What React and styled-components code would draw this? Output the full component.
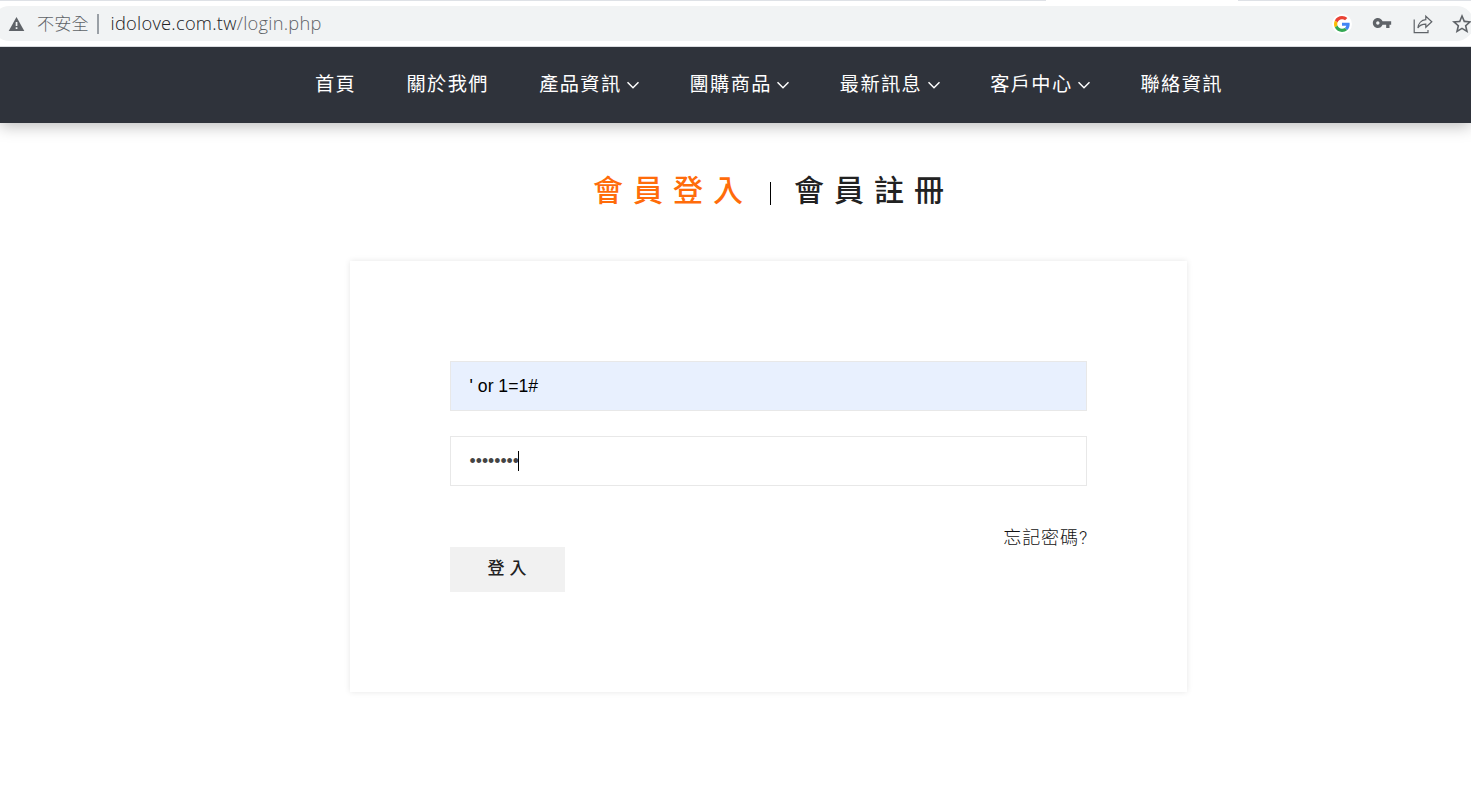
import styled, { createGlobalStyle } from "styled-components";

const GlobalStyle = createGlobalStyle`
  * {
    box-sizing: border-box;
  }

  body {
    margin: 0;
    background: #fff;
    color: #222;
    font-family: "Liberation Sans", "Noto Sans CJK TC", sans-serif;
    overflow: hidden;
  }
`;

const Page = styled.div`
  width: 100%;
  height: 808px;
  overflow: hidden;
`;

const Browser = styled.div`
  position: relative;
  z-index: 1;
  height: 47px;
  background: #fff;
  border-bottom: 1px solid #dadce0;
`;

const TabStrip = styled.div`
  display: flex;
  justify-content: space-between;
  height: 1px;
  margin-bottom: 5px;
`;

const TabEdge = styled.div`
  width: ${(props) => props.$width}px;
  background: #dee1e6;
`;

const AddressBar = styled.div`
  display: flex;
  align-items: center;
  justify-content: space-between;
  height: 35px;
  margin-left: -8px;
  margin-right: -3px;
  padding: 0 3px 0 16px;
  background: #f1f3f4;
  border-radius: 18px;
`;

const Address = styled.div`
  display: flex;
  align-items: center;
  height: 35px;
  color: #5f6368;
  font-family: "Open Sans", "Noto Sans CJK TC", sans-serif;
  font-size: 18.3px;
  font-weight: 300;
  line-height: 35px;
  white-space: nowrap;

  svg {
    display: block;
  }
`;

const Warning = styled.span`
  margin-left: 12px;
  padding-bottom: 2px;
  font-family: "Noto Sans CJK TC", sans-serif;
  font-size: 17.2px;
  font-weight: 300;
`;

const Divider = styled.span`
  width: 2px;
  height: 20px;
  margin: 0 12px 0 8px;
  background: #9aa0a6;
`;

const Url = styled.span`
  padding-bottom: 2px;
  letter-spacing: 0.25px;
`;

const Host = styled.span`
  color: #202124;
`;

const Tools = styled.div`
  display: flex;
  align-items: center;
  color: #5f6368;

  svg {
    display: block;
  }
`;

const GoogleBadge = styled.div`
  display: flex;
  align-items: center;
  justify-content: center;
  width: 20px;
  height: 20px;
  margin-right: 20px;
  border-radius: 50%;
  background: #fff;
`;

const KeyIcon = styled.svg`
  margin: 0 21px 2px 0;
`;

const ShareIcon = styled.svg`
  margin-right: 19px;
`;

const Nav = styled.nav`
  display: flex;
  gap: 50.3px;
  height: 76px;
  padding-left: 315px;
  background: #2f333b;
  box-shadow: 0 3px 15px rgba(0, 0, 0, 0.27);
`;

const NavItem = styled.a`
  display: flex;
  align-items: center;
  height: 72px;
  color: #fff;
  font-family: "Noto Sans CJK TC", sans-serif;
  font-size: 19.2px;
  font-weight: 400;
  letter-spacing: 1.4px;
  white-space: nowrap;
`;

const Chevron = styled.svg`
  display: block;
  width: 12px;
  height: 8px;
  margin: 4px 0.3px 0 5.4px;
`;

const Tabs = styled.div`
  display: flex;
  align-items: center;
  height: 44px;
  margin: 43px 0 51px 593px;
`;

const Tab = styled.a`
  color: ${(props) => (props.$active ? "#ff6c0a" : "#222")};
  font-family: "Noto Sans CJK TC", sans-serif;
  font-size: 30px;
  font-weight: 500;
  line-height: 44px;
  letter-spacing: 10px;
  white-space: nowrap;
`;

const TabDivider = styled.span`
  width: 1px;
  height: 23px;
  margin: 10px 23px 0 17px;
  background: #000;
`;

const Card = styled.form`
  width: 837px;
  height: 431px;
  margin-left: 350px;
  padding: 100px;
  box-shadow: 0 0 6px rgba(0, 0, 0, 0.1);
`;

const Field = styled.div`
  display: flex;
  align-items: center;
  height: 50px;
  margin-bottom: 25px;
  padding: 0 18px;
  border: 1px solid #e8e8e8;
  background: ${(props) => (props.$filled ? "#e8f0fe" : "#fff")};
  color: ${(props) => (props.$filled ? "#000" : "#444")};
  font-size: 17.6px;
  text-indent: 0.6px;
`;

const Caret = styled.span`
  width: 1px;
  height: 20px;
  margin-left: -1px;
  background: #000;
`;

const Actions = styled.div`
  display: flex;
  justify-content: space-between;
  align-items: flex-start;
  padding-top: 11px;
`;

const Submit = styled.button`
  width: 115px;
  height: 45px;
  margin-top: 25px;
  padding: 0 0 6px 4px;
  border: 0;
  background: #f1f1f1;
  color: #222;
  font-family: "Noto Sans CJK TC", sans-serif;
  font-size: 17px;
  font-weight: 500;
  letter-spacing: 5px;
`;

const Forgot = styled.a`
  color: #111;
  font-family: Roboto, "Noto Sans CJK TC", sans-serif;
  font-size: 18px;
  font-weight: 300;
  line-height: 32px;
  letter-spacing: 0.9px;
  margin-right: -1px;
`;

const menu = [
  { label: "首頁" },
  { label: "關於我們" },
  { label: "產品資訊", more: true },
  { label: "團購商品", more: true },
  { label: "最新訊息", more: true },
  { label: "客戶中心", more: true },
  { label: "聯絡資訊" },
];

function BrowserBar() {
  return (
    <Browser>
      <TabStrip>
        <TabEdge $width={1046} />
        <TabEdge $width={233} />
      </TabStrip>
      <AddressBar>
        <Address>
          <svg width="17" height="16" viewBox="0 0 17 16">
            <path d="M8.5 1L16.3 15H.7Z" fill="#5f6368" />
            <path d="M7.7 6h1.7v4H7.7zM7.7 11.3h1.7V13H7.7z" fill="#f1f3f4" />
          </svg>
          <Warning>不安全</Warning>
          <Divider />
          <Url>
            <Host>idolove.com.tw</Host>/login.php
          </Url>
        </Address>
        <Tools>
          <GoogleBadge>
            <svg width="16" height="16" viewBox="0 0 48 48">
              <path fill="#EA4335" d="M24 9.5c3.54 0 6.71 1.22 9.21 3.6l6.85-6.85C35.9 2.38 30.47 0 24 0 14.62 0 6.51 5.38 2.56 13.22l7.98 6.19C12.43 13.72 17.74 9.5 24 9.5z" />
              <path fill="#4285F4" d="M46.98 24.55c0-1.57-.15-3.09-.38-4.55H24v9.02h12.94c-.58 2.96-2.26 5.48-4.78 7.18l7.73 6c4.51-4.18 7.09-10.36 7.09-17.65z" />
              <path fill="#FBBC05" d="M10.53 28.59c-.48-1.45-.76-2.99-.76-4.59s.27-3.14.76-4.59l-7.98-6.19C.92 16.46 0 20.12 0 24c0 3.88.92 7.54 2.56 10.78l7.97-6.19z" />
              <path fill="#34A853" d="M24 48c6.48 0 11.93-2.13 15.89-5.81l-7.73-6c-2.15 1.45-4.92 2.3-8.16 2.3-6.26 0-11.57-4.22-13.47-9.91l-7.98 6.19C6.51 42.62 14.62 48 24 48z" />
            </svg>
          </GoogleBadge>
          <KeyIcon width="20" height="20" viewBox="0 0 24 24" fill="currentColor">
            <path d="M12.65 10C11.83 7.67 9.61 6 7 6c-3.31 0-6 2.69-6 6s2.69 6 6 6c2.61 0 4.83-1.67 5.65-4H17v4h4v-4h2v-4H12.65zM7 14c-1.1 0-2-.9-2-2s.9-2 2-2 2 .9 2 2-.9 2-2 2z" />
          </KeyIcon>
          <ShareIcon
            width="20"
            height="20"
            viewBox="0 0 20 20"
            fill="none"
            stroke="currentColor"
            strokeWidth="1.2"
          >
            <path d="M1.2 5.5v13.2H15V16" />
            <path d="M12.8 2.2L18.8 7.7l-6 5.6v-3.1C9 10.2 6.7 11 4.9 14c.4-4.3 3.3-7.9 7.9-8.3z" />
          </ShareIcon>
          <svg width="19" height="20" viewBox="2 2 19 20" fill="currentColor">
            <path d="M22 9.24l-7.19-.62L12 2 9.19 8.63 2 9.24l5.46 4.73L5.82 21 12 17.27 18.18 21l-1.63-7.03L22 9.24zM12 15.4l-3.76 2.27 1-4.28-3.32-2.88 4.38-.38L12 6.1l1.71 4.04 4.38.38-3.32 2.88 1 4.28L12 15.4z" />
          </svg>
        </Tools>
      </AddressBar>
    </Browser>
  );
}

function App() {
  return (
    <Page>
      <GlobalStyle />
      <BrowserBar />
      <Nav>
        {menu.map((item) => (
          <NavItem key={item.label}>
            {item.label}
            {item.more && (
              <Chevron viewBox="0 0 12 8" fill="none" stroke="#fff" strokeWidth="1.5">
                <path d="M.5 1.2L6 6.7l5.5-5.5" />
              </Chevron>
            )}
          </NavItem>
        ))}
      </Nav>
      <Tabs>
        <Tab $active>會員登入</Tab>
        <TabDivider />
        <Tab>會員註冊</Tab>
      </Tabs>
      <Card>
        <Field $filled>' or 1=1#</Field>
        <Field>
          ••••••••
          <Caret />
        </Field>
        <Actions>
          <Submit type="button">登入</Submit>
          <Forgot>忘記密碼?</Forgot>
        </Actions>
      </Card>
    </Page>
  );
}

export default App;
